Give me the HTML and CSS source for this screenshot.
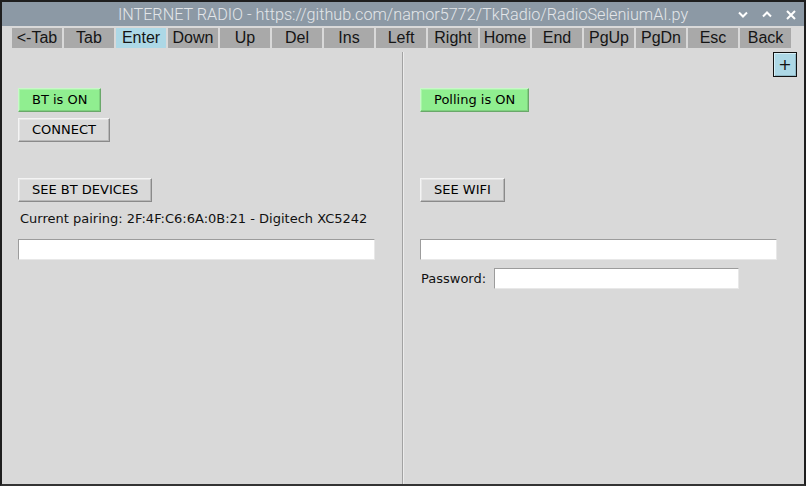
FILE: index.html
```html
<!DOCTYPE html>
<html>
<head>
<meta charset="utf-8">
<link rel="stylesheet" href="styles.css">
</head>
<body>
<div class="window">
  <div class="titlebar">
    <div></div>
    <div class="title">INTERNET RADIO - https://github.com/namor5772/TkRadio/RadioSeleniumAI.py</div>
    <div class="controls">
      <span class="ctl"><svg width="10" height="7" viewBox="0 0 10 7"><path d="M1 1.5 L5 5.5 L9 1.5" fill="none" stroke="#fff" stroke-width="2"/></svg></span>
      <span class="ctl"><svg width="10" height="7" viewBox="0 0 10 7"><path d="M1 5.5 L5 1.5 L9 5.5" fill="none" stroke="#fff" stroke-width="2"/></svg></span>
      <span class="ctl"><svg width="10" height="10" viewBox="0 0 10 10"><path d="M1 1 L9 9 M9 1 L1 9" fill="none" stroke="#fff" stroke-width="2"/></svg></span>
    </div>
  </div>
  <div class="keybar">
    <span class="key">&lt;-Tab</span>
    <span class="key">Tab</span>
    <span class="key key-active">Enter</span>
    <span class="key">Down</span>
    <span class="key">Up</span>
    <span class="key">Del</span>
    <span class="key">Ins</span>
    <span class="key">Left</span>
    <span class="key">Right</span>
    <span class="key">Home</span>
    <span class="key">End</span>
    <span class="key">PgUp</span>
    <span class="key">PgDn</span>
    <span class="key">Esc</span>
    <span class="key">Back</span>
  </div>
  <div class="main">
    <div class="pane">
      <button class="btn btn-green">BT is ON</button>
      <button class="btn mt-6">CONNECT</button>
      <button class="btn mt-36">SEE BT DEVICES</button>
      <div class="label mt-7">Current pairing: 2F:4F:C6:6A:0B:21 - Digitech XC5242</div>
      <div class="entry entry-wide mt-10"></div>
    </div>
    <div class="divider"></div>
    <div class="pane pane-right">
      <button class="plus">+</button>
      <button class="btn btn-green">Polling is ON</button>
      <button class="btn mt-66">SEE WIFI</button>
      <div class="entry entry-wide mt-37"></div>
      <div class="pwrow">
        <span class="label">Password:</span>
        <div class="entry entry-pw"></div>
      </div>
    </div>
  </div>
</div>
</body>
</html>
```
FILE: styles.css
```css
* { box-sizing: border-box; }
html, body { margin: 0; padding: 0; }
body { background: #d9d9d9; }
.window {
  width: 806px;
  height: 486px;
  border: 2px solid #1e1e1e;
  border-bottom-color: #333;
  background: #d9d9d9;
  display: flex;
  flex-direction: column;
  overflow: hidden;
}
.titlebar {
  height: 24px;
  flex: none;
  background: #8c99a5;
  display: grid;
  grid-template-columns: 1fr auto 1fr;
  align-items: center;
}
.title {
  font-family: Roboto, "Liberation Sans", sans-serif;
  font-weight: 300;
  font-size: 16.2px;
  color: #e3e6e9;
  white-space: nowrap;
  line-height: 24px;
  padding-top: 1px;
}
.controls {
  display: flex;
  justify-content: flex-end;
  padding-right: 1px;
}
.ctl {
  width: 24px;
  height: 24px;
  display: flex;
  align-items: center;
  justify-content: center;
}
.keybar {
  flex: none;
  display: flex;
  gap: 2px;
  padding: 2px 0 0 10px;
  height: 22px;
}
.key {
  width: 50px;
  height: 20px;
  background: #a9a9a9;
  color: #151515;
  font-family: "Liberation Sans", Arial, sans-serif;
  font-size: 16px;
  line-height: 20px;
  text-align: center;
  white-space: nowrap;
}
.key:last-child { width: 51px; }
.key-active { background: #add8e6; }
.main {
  flex: 1;
  display: flex;
  padding-top: 4px;
  min-height: 0;
}
.pane {
  width: 400px;
  position: relative;
  display: flex;
  flex-direction: column;
  align-items: flex-start;
  padding: 36px 0 0 16px;
}
.divider {
  width: 2px;
  flex: none;
  border-left: 1px solid #a2a2a2;
  border-right: 1px solid #ececec;
}
.btn {
  font-family: "DejaVu Sans", sans-serif;
  font-size: 13px;
  color: #000;
  height: 24px;
  padding: 0 13px;
  background: #d9d9d9;
  border: 1px solid;
  border-color: #f4f4f4 #8a8a8a #8a8a8a #f4f4f4;
  box-shadow: inset -1px -1px 0 #b8b8b8, inset 1px 1px 0 #e6e6e6;
  line-height: 22px;
  margin: 0;
  white-space: nowrap;
}
.btn-green {
  background: #90ee90;
  border-color: #c8f8c8 #6aa86a #6aa86a #c8f8c8;
  box-shadow: inset -1px -1px 0 #7fd17f, inset 1px 1px 0 #a8f3a8;
}
.label {
  font-family: "DejaVu Sans", sans-serif;
  font-size: 13px;
  color: #111;
  line-height: 20px;
  padding-left: 2px;
  white-space: nowrap;
}
.entry {
  background: #fff;
  height: 21px;
  border: 1px solid;
  border-color: #9c9c9c #e8e8e8 #e8e8e8 #9c9c9c;
}
.entry-wide { width: 357px; }
.entry-pw { width: 245px; }
.pwrow {
  display: flex;
  align-items: center;
  gap: 8px;
  margin-top: 8px;
}
.pwrow .label { padding-left: 1px; }
.plus {
  position: absolute;
  top: 0;
  right: 7px;
  width: 24px;
  height: 25px;
  margin: 0;
  padding: 0;
  background: #add8e6;
  border: 1px solid #111;
  box-shadow: inset 1px 1px 0 #d6eef5, inset -1px -1px 0 #8fb8c6;
  font-family: "DejaVu Sans", sans-serif;
  font-size: 16px;
  line-height: 22px;
  color: #111;
}
.mt-6 { margin-top: 6px; }
.mt-7 { margin-top: 7px; }
.mt-10 { margin-top: 10px; }
.mt-36 { margin-top: 36px; }
.mt-37 { margin-top: 37px; }
.mt-66 { margin-top: 66px; }
```
